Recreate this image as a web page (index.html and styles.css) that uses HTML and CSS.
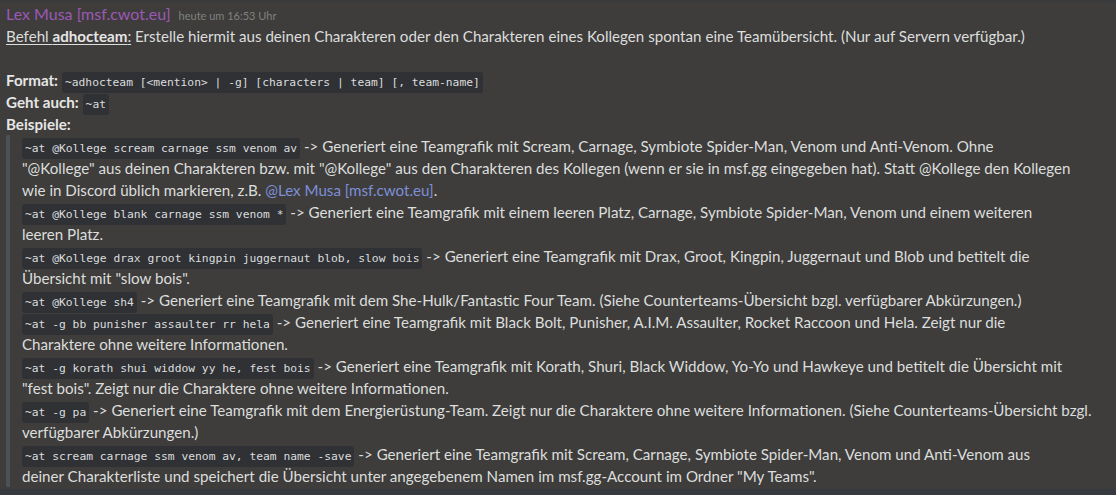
FILE: index.html
```html
<!DOCTYPE html>
<html lang="de">
<head>
<meta charset="utf-8">
<title>adhocteam</title>
<link rel="stylesheet" href="styles.css">
</head>
<body>
<div class="topline"></div>
<div class="message">
  <div class="header">
    <span class="author">Lex Musa [msf.cwot.eu]</span>
    <span class="time">heute um 16:53 Uhr</span>
  </div>
  <div class="content">
    <div class="line"><u>Befehl <b>adhocteam</b>:</u> Erstelle hiermit aus deinen Charakteren oder den Charakteren eines Kollegen spontan eine Teamübersicht. (Nur auf Servern verfügbar.)</div>
    <div class="line blank"></div>
    <div class="line"><b>Format:</b> <code>~adhocteam [&lt;mention&gt; | -g] [characters | team] [, team-name]</code></div>
    <div class="line"><b>Geht auch:</b> <code>~at</code></div>
    <div class="line"><b>Beispiele:</b></div>
    <blockquote class="quote">
      <div class="line"><code>~at @Kollege scream carnage ssm venom av</code> -&gt; Generiert eine Teamgrafik mit Scream, Carnage, Symbiote Spider-Man, Venom und Anti-Venom. Ohne<br>"@Kollege" aus deinen Charakteren bzw. mit "@Kollege" aus den Charakteren des Kollegen (wenn er sie in msf.gg eingegeben hat). Statt @Kollege den Kollegen<br>wie in Discord üblich markieren, z.B. <span class="mention">@Lex Musa [msf.cwot.eu]</span>.</div>
      <div class="line"><code>~at @Kollege blank carnage ssm venom *</code> -&gt; Generiert eine Teamgrafik mit einem leeren Platz, Carnage, Symbiote Spider-Man, Venom und einem weiteren<br>leeren Platz.</div>
      <div class="line"><code>~at @Kollege drax groot kingpin juggernaut blob, slow bois</code> -&gt; Generiert eine Teamgrafik mit Drax, Groot, Kingpin, Juggernaut und Blob und betitelt die<br>Übersicht mit "slow bois".</div>
      <div class="line"><code>~at @Kollege sh4</code> -&gt; Generiert eine Teamgrafik mit dem She-Hulk/Fantastic Four Team. (Siehe Counterteams-Übersicht bzgl. verfügbarer Abkürzungen.)</div>
      <div class="line"><code>~at -g bb punisher assaulter rr hela</code> -&gt; Generiert eine Teamgrafik mit Black Bolt, Punisher, A.I.M. Assaulter, Rocket Raccoon und Hela. Zeigt nur die<br>Charaktere ohne weitere Informationen.</div>
      <div class="line"><code>~at -g korath shui widdow yy he, fest bois</code> -&gt; Generiert eine Teamgrafik mit Korath, Shuri, Black Widdow, Yo-Yo und Hawkeye und betitelt die Übersicht mit<br>"fest bois". Zeigt nur die Charaktere ohne weitere Informationen.</div>
      <div class="line"><code>~at -g pa</code> -&gt; Generiert eine Teamgrafik mit dem Energierüstung-Team. Zeigt nur die Charaktere ohne weitere Informationen. (Siehe Counterteams-Übersicht bzgl.<br>verfügbarer Abkürzungen.)</div>
      <div class="line"><code>~at scream carnage ssm venom av, team name -save</code> -&gt; Generiert eine Teamgrafik mit Scream, Carnage, Symbiote Spider-Man, Venom und Anti-Venom aus<br>deiner Charakterliste und speichert die Übersicht unter angegebenem Namen im msf.gg-Account im Ordner "My Teams".</div>
    </blockquote>
  </div>
</div>
<div class="bottomband"></div>
</body>
</html>
```
FILE: styles.css
```css
html, body {
  margin: 0;
  padding: 0;
}
body {
  background: #3e3d3b;
  color: #dcdddd;
  font-family: Lato, "Noto Sans", sans-serif;
  font-size: 15.15px;
  width: 1116px;
  height: 495px;
  overflow: hidden;
  display: flex;
  flex-direction: column;
}
.topline {
  height: 2px;
  background: #393a3c;
}
.message {
  flex: 1;
  padding: 1px 4px 0 6px;
}
.header {
  display: flex;
  align-items: baseline;
  gap: 8px;
  height: 22px;
  line-height: 22px;
}
.author {
  color: #9b59b6;
  font-size: 16px;
}
.time {
  color: #80817f;
  font-size: 11px;
}
.line {
  line-height: 22px;
  white-space: nowrap;
}
.blank {
  height: 22px;
}
b {
  font-weight: 700;
  color: #e6e6e6;
}
u {
  text-decoration-thickness: 1px;
  text-underline-offset: 2px;
}
code {
  font-family: "DejaVu Sans Mono", "Liberation Mono", monospace;
  font-size: 11.3px;
  line-height: 1;
  background: #2f3135;
  color: #dcdddd;
  padding: 4px 3px;
  border-radius: 3px;
}
.quote {
  margin: 0;
  padding-left: 12px;
  border-left: 4px solid #4e5258;
  border-radius: 2px;
}
.mention {
  color: #7d8fd8;
}
.bottomband {
  height: 6px;
  background: #36393f;
}
```
